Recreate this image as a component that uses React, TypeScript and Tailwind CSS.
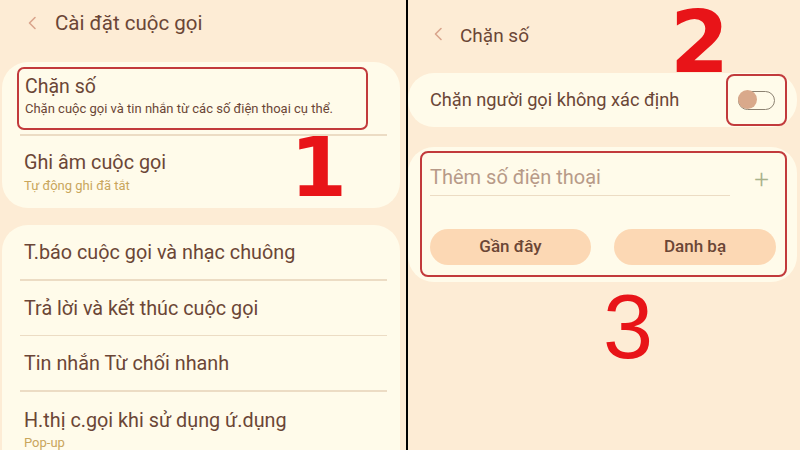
import React from 'react';

const font = { fontFamily: 'Roboto, "Noto Sans", sans-serif' };

function Chevron({ className }: { className?: string }) {
  return (
    <svg width="10" height="14" viewBox="0 0 10 14" className={className} fill="none">
      <path d="M8 1.5 L2.5 7 L8 12.5" stroke="#d9a48c" strokeWidth="1.6" strokeLinecap="round" strokeLinejoin="round" />
    </svg>
  );
}

function Divider({ className = '' }: { className?: string }) {
  return <div className={`h-[1.5px] bg-[#ecdcc4] ${className}`} />;
}

const LIST = [
  { title: 'T.báo cuộc gọi và nhạc chuông' },
  { title: 'Trả lời và kết thúc cuộc gọi' },
  { title: 'Tin nhắn Từ chối nhanh' },
];

function LeftPanel() {
  return (
    <div className="relative w-[406px] h-full bg-[#fdecd5] overflow-hidden">
      <div className="h-[62px] flex items-start pt-[8px] pl-[27px]">
        <Chevron className="mt-[8px]" />
        <span className="ml-[18px] text-[20.5px] text-[#6b4636]">Cài đặt cuộc gọi</span>
      </div>

      <div className="ml-[2px] mr-[6px] h-[146px] rounded-[26px] bg-[#fffbea] pt-[5px]">
        <div className="ml-[15px] w-[351px] h-[63px] border-2 border-[#c23a3c] rounded-[7px] pl-[6px] pt-[6px]">
          <div className="text-[19.5px] leading-[24px] text-[#6b4636]">Chặn số</div>
          <div className="text-[13px] leading-[20px] text-[#6b4636]">Chặn cuộc gọi và tin nhắn từ các số điện thoại cụ thể.</div>
        </div>
        <Divider className="mt-[4px] ml-[18px] mr-[13px]" />
        <div className="pl-[22px] pt-[14px]">
          <div className="text-[19.8px] leading-[26px] text-[#6b4636]">Ghi âm cuộc gọi</div>
          <div className="text-[13px] leading-[20px] text-[#c9a65c]">Tự động ghi đã tắt</div>
        </div>
      </div>

      <div className="mt-[17px] ml-[2px] mr-[6px] h-[260px] rounded-[26px] bg-[#fffbea]">
        {LIST.map((item) => (
          <div key={item.title}>
            <div className="h-[54px] flex items-center pt-[2px] pl-[22px] text-[19.8px] text-[#6b4636]">{item.title}</div>
            <Divider className="ml-[18px] mr-[13px]" />
          </div>
        ))}
        <div className="pl-[22px] pt-[16px]">
          <div className="text-[19.8px] leading-[26px] text-[#6b4636]">H.thị c.gọi khi sử dụng ứ.dụng</div>
          <div className="text-[13px] leading-[18px] text-[#c9a65c]">Pop-up</div>
        </div>
      </div>

      <span
        className="absolute left-[290px] top-[127px] text-[82px] leading-none font-bold text-[#e81418]"
        style={{ fontFamily: '"DejaVu Sans", sans-serif' }}
      >
        1
      </span>
    </div>
  );
}

function RightPanel() {
  return (
    <div className="relative flex-1 h-full bg-[#fdecd5] overflow-hidden">
      <div className="h-[73px] flex items-start pt-[22px] pl-[25px]">
        <Chevron className="mt-[5px]" />
        <span className="ml-[17px] text-[19px] text-[#6b4636]">Chặn số</span>
      </div>

      <div className="mr-[3px] h-[54px] rounded-[26px] bg-[#fffbea] flex items-center pl-[22px]">
        <span className="text-[18.2px] text-[#6b4636]">Chặn người gọi không xác định</span>
        <div className="ml-auto mr-[10px] w-[61px] h-[52px] border-2 border-[#c23a3c] rounded-[8px] flex items-center justify-center">
          <div className="relative w-[37px] h-[19px] rounded-full border-[1.5px] border-[#8c8272]">
            <div className="absolute -left-[1.5px] -top-[1.5px] w-[19px] h-[19px] rounded-full bg-[#d9a98b]" />
          </div>
        </div>
      </div>

      <div className="mt-[20px] mr-[3px] h-[135px] rounded-[26px] bg-[#fffbea] pt-[4px] pl-[12px] pr-[10px]">
        <div className="h-[126px] border-2 border-[#c23a3c] rounded-[8px] pl-[8px] pr-[8px]">
          <div className="flex items-end h-[43px]">
            <div className="w-[300px] h-[43px] flex flex-col justify-end">
              <span className="text-[20px] leading-[26px] text-[#b79a88]">Thêm số điện thoại</span>
              <div className="mt-[5px] h-[1.5px] bg-[#ecdcc4]" />
            </div>
            <span className="ml-auto mr-[8px] mb-[4px] text-[26px] leading-none font-light text-[#a9b28c]">+</span>
          </div>
          <div className="mt-[33px] flex gap-[23px]">
            <div className="w-[161px] h-[36px] rounded-full bg-[#fcd8b4] flex items-center justify-center text-[17px] font-medium text-[#6b4636]">Gần đây</div>
            <div className="w-[162px] h-[36px] rounded-full bg-[#fcd8b4] flex items-center justify-center text-[17px] font-medium text-[#6b4636]">Danh bạ</div>
          </div>
        </div>
      </div>

      <span
        className="absolute left-[262px] top-[0px] text-[85px] leading-none font-bold text-[#e81418]"
        style={{ fontFamily: '"DejaVu Sans", sans-serif' }}
      >
        2
      </span>
      <span
        className="absolute left-[195px] top-[282px] text-[90px] leading-none text-[#e81418]"
        style={{ fontFamily: '"Liberation Sans", sans-serif' }}
      >
        3
      </span>
    </div>
  );
}

export default function App() {
  return (
    <div className="w-[800px] h-[450px] flex overflow-hidden" style={font}>
      <LeftPanel />
      <div className="w-[2px] h-full bg-black" />
      <RightPanel />
    </div>
  );
}
